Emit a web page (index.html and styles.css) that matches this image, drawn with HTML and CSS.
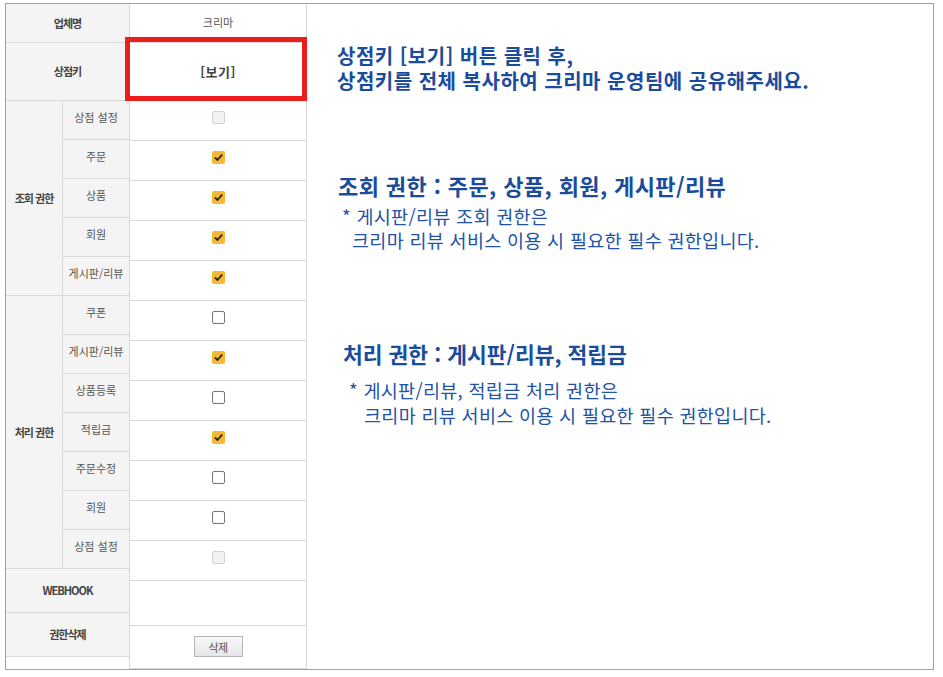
FILE: index.html
```html
<!DOCTYPE html>
<html lang="ko">
<head>
<meta charset="utf-8">
<title>권한 설정</title>
<link rel="stylesheet" href="styles.css">
</head>
<body>
<div class="frame">
  <div class="labels">
    <div class="head r1">업체명</div>
    <div class="head r2">상점키</div>
    <div class="group g1">조회 권한</div>
    <div class="sub">상점 설정</div>
    <div class="sub">주문</div>
    <div class="sub">상품</div>
    <div class="sub">회원</div>
    <div class="sub">게시판/리뷰</div>
    <div class="group g2">처리 권한</div>
    <div class="sub">쿠폰</div>
    <div class="sub">게시판/리뷰</div>
    <div class="sub">상품등록</div>
    <div class="sub">적립금</div>
    <div class="sub">주문수정</div>
    <div class="sub">회원</div>
    <div class="sub">상점 설정</div>
    <div class="head r3">WEBHOOK</div>
    <div class="head r4">권한삭제</div>
  </div>

  <div class="values">
    <div class="vrow v-name">크리마</div>
    <div class="vrow v-key">[보기]</div>
    <div class="vrow v-cb"><span class="cb disabled"></span></div>
    <div class="vrow v-cb"><span class="cb checked"><svg viewBox="0 0 13 13"><path d="M3.3 6.9 L5.5 9 L9.7 4.1"/></svg></span></div>
    <div class="vrow v-cb"><span class="cb checked"><svg viewBox="0 0 13 13"><path d="M3.3 6.9 L5.5 9 L9.7 4.1"/></svg></span></div>
    <div class="vrow v-cb"><span class="cb checked"><svg viewBox="0 0 13 13"><path d="M3.3 6.9 L5.5 9 L9.7 4.1"/></svg></span></div>
    <div class="vrow v-cb"><span class="cb checked"><svg viewBox="0 0 13 13"><path d="M3.3 6.9 L5.5 9 L9.7 4.1"/></svg></span></div>
    <div class="vrow v-cb"><span class="cb"></span></div>
    <div class="vrow v-cb"><span class="cb checked"><svg viewBox="0 0 13 13"><path d="M3.3 6.9 L5.5 9 L9.7 4.1"/></svg></span></div>
    <div class="vrow v-cb"><span class="cb"></span></div>
    <div class="vrow v-cb"><span class="cb checked"><svg viewBox="0 0 13 13"><path d="M3.3 6.9 L5.5 9 L9.7 4.1"/></svg></span></div>
    <div class="vrow v-cb"><span class="cb"></span></div>
    <div class="vrow v-cb"><span class="cb"></span></div>
    <div class="vrow v-cb"><span class="cb disabled"></span></div>
    <div class="vrow v-hook"></div>
    <div class="vrow v-del"><span class="btn">삭제</span></div>
  </div>

  <div class="notes">
    <p class="h1"><span class="line">상점키 [보기] 버튼 클릭 후,</span><span class="line">상점키를 전체 복사하여 크리마 운영팀에 공유해주세요.</span></p>
    <p class="h2">조회 권한 : 주문, 상품, 회원, 게시판/리뷰</p>
    <p class="t1"><span class="line">* 게시판/리뷰 조회 권한은</span><span class="line ind">크리마 리뷰 서비스 이용 시 필요한 필수 권한입니다.</span></p>
    <p class="h3">처리 권한 : 게시판/리뷰, 적립금</p>
    <p class="t2"><span class="line">* 게시판/리뷰, 적립금 처리 권한은</span><span class="line ind">크리마 리뷰 서비스 이용 시 필요한 필수 권한입니다.</span></p>
  </div>

  <div class="highlight"></div>
</div>
</body>
</html>
```

FILE: styles.css
```css
* { box-sizing: border-box; }

body {
  margin: 0;
  background: #ffffff;
  font-family: "Noto Sans CJK KR", "Noto Sans", sans-serif;
}

.frame {
  position: relative;
  margin: 3px 0 0 5px;
  width: 929px;
  height: 667px;
  border: 1px solid #8ca1d4;
  display: flex;
  align-items: flex-start;
  background: #fff;
}

/* left label table */
.labels {
  width: 123px;
  display: grid;
  grid-template-columns: 57px 66px;
  grid-template-rows: 39px 58px repeat(12, 39px) 44px 44px;
  background: #f4f4f4;
}

.labels > div {
  border-bottom: 1px solid #d9d9d9;
  color: #555;
  font-size: 11px;
  text-align: center;
}

.head {
  grid-column: 1 / 3;
  display: flex;
  align-items: center;
  justify-content: center;
  font-weight: bold;
  letter-spacing: -1px;
  color: #444 !important;
  padding-bottom: 1px;
}

.group {
  grid-column: 1;
  display: flex;
  align-items: center;
  justify-content: center;
  font-weight: bold;
  letter-spacing: -1px;
  color: #444 !important;
  border-right: 1px solid #d9d9d9;
}
.g1 { grid-row: 3 / 8; }
.g2 { grid-row: 8 / 15; }

.sub {
  grid-column: 2;
  padding-top: 8px;
  line-height: 16px;
  white-space: nowrap;
}

/* value column */
.values {
  width: 178px;
  display: flex;
  flex-direction: column;
  border-left: 1px solid #d9d9d9;
  border-right: 1px solid #d9d9d9;
}

.vrow {
  border-bottom: 1px solid #d9d9d9;
  display: flex;
  justify-content: center;
}
.v-name {
  height: 39px;
  align-items: center;
  font-size: 11px;
  color: #555;
  padding-bottom: 3px;
}
.v-key {
  height: 58px;
  align-items: center;
  font-size: 13px;
  font-weight: bold;
  color: #444;
  letter-spacing: 0.5px;
}
.v-cb {
  height: 40px;
  align-items: flex-start;
  padding-top: 10px;
}
.v-hook { height: 45px; }
.v-del {
  height: 43px;
  align-items: flex-start;
  padding-top: 10px;
}

.cb {
  display: block;
  width: 13px;
  height: 13px;
  border: 1px solid #767676;
  border-radius: 2px;
  background: #fff;
}
.cb.disabled {
  border-color: #d3d3d3;
  background: #f2f2f2;
}
.cb.checked {
  border: none;
  background: #f7b934;
}
.cb svg {
  display: block;
  width: 13px;
  height: 13px;
}
.cb svg path {
  fill: none;
  stroke: #2b2b2b;
  stroke-width: 1.9;
  stroke-linecap: round;
  stroke-linejoin: round;
}

.btn {
  display: flex;
  align-items: center;
  justify-content: center;
  width: 49px;
  height: 21px;
  border: 1px solid #b5b5b5;
  background: linear-gradient(#f8f8f8, #e6e6e6);
  font-size: 11px;
  color: #555;
  letter-spacing: -0.5px;
}

/* annotations */
.notes {
  flex: 1;
  padding-left: 30px;
  color: #1b4c9c;
}
.notes p { margin: 0; }
.line { display: block; white-space: nowrap; }

.h1 {
  margin-top: 38.5px !important;
  font-size: 20px;
  line-height: 25px;
  font-weight: bold;
  letter-spacing: 0.5px;
}
.h2 {
  margin-top: 79px !important;
  margin-left: 1px !important;
  font-size: 22px;
  line-height: 26px;
  font-weight: bold;
  letter-spacing: 0.4px;
}
.t1 {
  margin-top: 6px !important;
  margin-left: 5px !important;
  font-size: 18.5px;
  line-height: 24px;
  letter-spacing: 0.3px;
  color: #2253a6;
}
.t1 .ind { padding-left: 10px; }
.h3 {
  margin-top: 89px !important;
  margin-left: 6px !important;
  font-size: 21.5px;
  line-height: 26px;
  font-weight: bold;
}
.t2 {
  margin-top: 11px !important;
  margin-left: 12px !important;
  font-size: 18.5px;
  line-height: 25px;
  letter-spacing: 0.3px;
  color: #2253a6;
}
.t2 .ind { padding-left: 15px; }

/* red annotation box over the 상점키 value */
.highlight {
  position: absolute;
  left: 119px;
  top: 33px;
  width: 182px;
  height: 64px;
  border: 5px solid #ec1d1d;
}
```
